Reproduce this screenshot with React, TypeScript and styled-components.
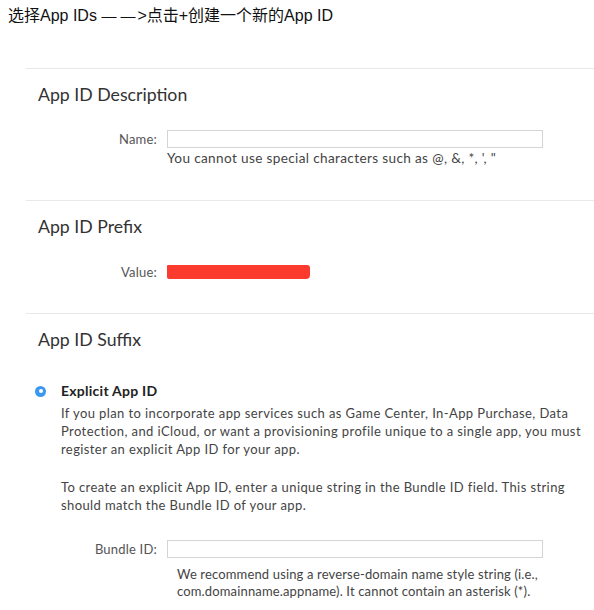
import React from "react";
import styled, { createGlobalStyle } from "styled-components";

const Global = createGlobalStyle`
  html, body { margin: 0; padding: 0; background: #ffffff; }
  body { width: 594px; overflow: hidden; }
`;

const Page = styled.div`
  width: 594px;
  min-height: 610px;
  background: #fff;
`;

const Caption = styled.div`
  font-family: "Liberation Sans", "Noto Sans CJK SC", sans-serif;
  font-size: 16px;
  line-height: 18px;
  color: #111;
  padding: 7px 0 0 8px;
  box-sizing: border-box;
  height: 68px;
`;

const Dashes = styled.span`
  font-family: "Liberation Sans", sans-serif;
  font-size: 15px;
  letter-spacing: 4px;
  margin-right: -2px;
  font-feature-settings: "liga" 0, "kern" 0;
`;

const Sections = styled.div`
  margin-left: 26px;
`;

const Section = styled.section<{ $bottom: number }>`
  border-top: 1px solid #e8e8e8;
  padding: 16px 0 ${(p) => p.$bottom}px 0;
`;

const Heading = styled.h2`
  margin: 0 0 0 12px;
  font-family: Lato, "Open Sans", sans-serif;
  font-weight: 400;
  font-size: 17.7px;
  line-height: 20px;
  color: #333;
`;

const FieldRow = styled.div<{ $top: number }>`
  display: grid;
  grid-template-columns: 131px 376px;
  column-gap: 10px;
  align-items: center;
  margin-top: ${(p) => p.$top}px;
  font-family: Lato, "Open Sans", sans-serif;
  font-size: 13px;
  letter-spacing: 0.2px;
  color: #555;
`;

const Label = styled.label`
  text-align: right;
  line-height: 18px;
`;

const TextInput = styled.div`
  height: 18px;
  border: 1px solid #d4d4d4;
  box-sizing: border-box;
  background: #fff;
`;

const Hint = styled.div<{ $indent: number; $top: number; $lh: number; $size: number; $ls: number }>`
  margin: ${(p) => p.$top}px 0 0 ${(p) => 141 + p.$indent}px;
  font-family: Lato, "Open Sans", sans-serif;
  font-size: ${(p) => p.$size}px;
  letter-spacing: ${(p) => p.$ls}px;
  line-height: ${(p) => p.$lh}px;
  color: #444;
`;

const ValueText = styled.div`
  display: flex;
  align-items: center;
  line-height: 18px;
`;

const Redaction = styled.span`
  display: inline-block;
  width: 143px;
  height: 14px;
  background: #fc3a2e;
  border-radius: 1px 3px 4px 2px;
`;

const RadioRow = styled.div`
  display: flex;
  align-items: center;
  margin: 32px 0 0 9px;
  gap: 15px;
`;

const Radio = styled.span`
  width: 11px;
  height: 11px;
  border-radius: 50%;
  background: #3a98f2;
  display: flex;
  align-items: center;
  justify-content: center;
  &::after {
    content: "";
    width: 4px;
    height: 4px;
    border-radius: 50%;
    background: #fff;
  }
`;

const OptionTitle = styled.span`
  font-family: Lato, "Open Sans", sans-serif;
  font-weight: 700;
  font-size: 14px;
  letter-spacing: 0.25px;
  line-height: 18px;
  color: #222;
`;

const Para = styled.p<{ $top: number }>`
  margin: ${(p) => p.$top}px 0 0 35px;
  font-family: Lato, "Open Sans", sans-serif;
  font-size: 13px;
  letter-spacing: 0.4px;
  line-height: 18px;
  color: #444;
`;

export default function App() {
  return (
    <Page>
      <Global />
      <Caption>
        选择App IDs <Dashes>——</Dashes>&gt;点击+创建一个新的App ID
      </Caption>
      <Sections>
        <Section $bottom={34}>
          <Heading>App ID Description</Heading>
          <FieldRow $top={25}>
            <Label>Name:</Label>
            <TextInput />
          </FieldRow>
          <Hint $indent={0} $top={2} $lh={16} $size={13.6} $ls={0.35}>
            You cannot use special characters such as @, &amp;, *, ', "
          </Hint>
        </Section>
        <Section $bottom={32}>
          <Heading>App ID Prefix</Heading>
          <FieldRow $top={26}>
            <Label>Value:</Label>
            <ValueText>
              <Redaction />
            </ValueText>
          </FieldRow>
        </Section>
        <Section $bottom={20}>
          <Heading>App ID Suffix</Heading>
          <RadioRow>
            <Radio />
            <OptionTitle>Explicit App ID</OptionTitle>
          </RadioRow>
          <Para $top={4}>
            If you plan to incorporate app services such as Game Center, In-App Purchase, Data
            <br />
            Protection, and iCloud, or want a provisioning profile unique to a single app, you must
            <br />
            register an explicit App ID for your app.
          </Para>
          <Para $top={20}>
            To create an explicit App ID, enter a unique string in the Bundle ID field. This string
            <br />
            should match the Bundle ID of your app.
          </Para>
          <FieldRow $top={26}>
            <Label>Bundle ID:</Label>
            <TextInput />
          </FieldRow>
          <Hint $indent={10} $top={8} $lh={17} $size={13} $ls={0.15}>
            We recommend using a reverse-domain name style string (i.e.,
            <br />
            com.domainname.appname). It cannot contain an asterisk (*).
          </Hint>
        </Section>
      </Sections>
    </Page>
  );
}
